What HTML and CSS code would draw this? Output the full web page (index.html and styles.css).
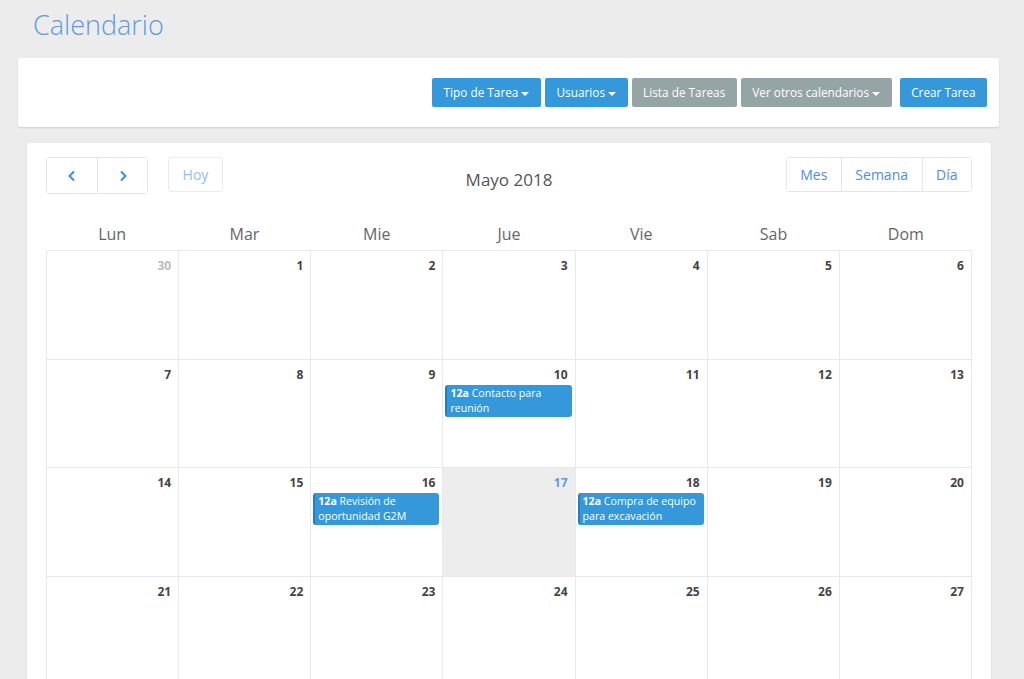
FILE: index.html
```html
<!DOCTYPE html>
<html lang="es">
  <head>
    <meta charset="UTF-8">
    <meta name="viewport" content="width=device-width, initial-scale=1.0">
    <title>Calendario</title>
    <link rel="stylesheet" href="styles.css">
  </head>
  <body>
    <h1 class="page-title">Calendario</h1>

    <div class="panel toolbar">
      <button class="btn btn-blue">Tipo de Tarea <span class="caret"></span></button>
      <button class="btn btn-blue">Usuarios <span class="caret"></span></button>
      <button class="btn btn-gray">Lista de Tareas</button>
      <button class="btn btn-gray">Ver otros calendarios <span class="caret"></span></button>
      <button class="btn btn-blue btn-create">Crear Tarea</button>
    </div>

    <div class="panel calendar">
      <div class="cal-header">
        <div class="cal-left">
          <div class="btn-group">
            <button class="cal-btn arrow">
              <svg width="10" height="12" viewBox="0 0 10 12"><path d="M7 1.5 L2.5 6 L7 10.5" fill="none" stroke="#3b8fd9" stroke-width="2"/></svg>
            </button>
            <button class="cal-btn arrow">
              <svg width="10" height="12" viewBox="0 0 10 12"><path d="M3 1.5 L7.5 6 L3 10.5" fill="none" stroke="#3b8fd9" stroke-width="2"/></svg>
            </button>
          </div>
          <button class="cal-btn today-btn">Hoy</button>
        </div>
        <h2 class="cal-title">Mayo 2018</h2>
        <div class="cal-right">
          <div class="btn-group">
            <button class="cal-btn view">Mes</button>
            <button class="cal-btn view">Semana</button>
            <button class="cal-btn view">Día</button>
          </div>
        </div>
      </div>

      <div class="day-names">
        <div>Lun</div><div>Mar</div><div>Mie</div><div>Jue</div><div>Vie</div><div>Sab</div><div>Dom</div>
      </div>

      <div class="month-grid" id="grid"></div>
    </div>

    <script>
      const grid = document.getElementById('grid');
      const events = {
        10: 'Contacto para reunión',
        16: 'Revisión de oportunidad G2M',
        18: 'Compra de equipo para excavación'
      };
      // 30 abril .. 10 junio
      const days = [30];
      for (let d = 1; d <= 31; d++) days.push(d);
      for (let d = 1; d <= 10; d++) days.push(d);

      days.forEach((d, i) => {
        const other = i === 0 || i > 31;
        const cell = document.createElement('div');
        cell.className = 'day';
        if (other) cell.classList.add('other');
        if (!other && d === 17) cell.classList.add('is-today');
        const num = document.createElement('div');
        num.className = 'day-num';
        num.innerText = d;
        cell.appendChild(num);
        if (!other && events[d]) {
          const ev = document.createElement('div');
          ev.className = 'event';
          ev.innerHTML = '<b>12a</b> ' + events[d];
          cell.appendChild(ev);
        }
        grid.appendChild(cell);
      });
    </script>
  </body>
</html>
```

FILE: styles.css
```css
html {
  overflow: hidden;
}

body {
  margin: 0;
  background-color: #ececec;
  font-family: "Open Sans", "DejaVu Sans", sans-serif;
  color: #444;
}

.page-title {
  margin: 0;
  padding: 6px 33px 0;
  height: 52px;
  font-size: 27px;
  font-weight: 300;
  line-height: 38px;
  color: #5c9ce0;
}

.panel {
  background-color: #fff;
  border-radius: 3px;
  box-shadow: 0 1px 2px rgba(0, 0, 0, 0.12);
}

.toolbar {
  margin: 0 25px 0 18px;
  height: 69px;
  padding: 0 12px;
  display: flex;
  justify-content: flex-end;
  align-items: center;
  gap: 4px;
}

.btn {
  height: 29px;
  padding: 0 11.5px;
  border: none;
  border-radius: 2px;
  font-family: inherit;
  font-size: 11.8px;
  line-height: 27px;
  color: #fff;
}

.btn-blue {
  background-color: #3498db;
}

.btn-gray {
  background-color: #95a5a6;
}

.btn-create {
  margin-left: 4px;
}

.caret {
  display: inline-block;
  margin-left: 0;
  vertical-align: middle;
  border-top: 4px solid #fff;
  border-left: 4px solid transparent;
  border-right: 4px solid transparent;
}

.calendar {
  margin: 16px 33px 0 27px;
  padding: 14px 19px 0 19px;
  height: 560px;
}

.cal-header {
  display: grid;
  grid-template-columns: 1fr auto 1fr;
  align-items: start;
}

.cal-left {
  display: flex;
  gap: 20px;
}

.cal-right {
  display: flex;
  justify-content: flex-end;
}

.btn-group {
  display: flex;
  border: 1px solid #e3e6ea;
  border-radius: 3px;
}

.cal-btn {
  background: #fff;
  border: none;
  font-family: inherit;
  font-size: 14px;
  color: #4a90d9;
  height: 35px;
}

.btn-group .cal-btn + .cal-btn {
  border-left: 1px solid #e3e6ea;
}

.arrow {
  width: 50px;
  height: 35px;
}

.arrow svg {
  display: block;
  margin: 0 auto;
}

.today-btn {
  width: 55px;
  height: 35px;
  border: 1px solid #ececec;
  border-radius: 3px;
  color: #8fc1ee;
}

.view {
  padding: 0 13.5px;
  height: 33px;
}

.cal-title {
  margin: 11px 0 0;
  font-size: 17px;
  font-weight: 400;
  color: #555;
}

.day-names {
  display: grid;
  grid-template-columns: repeat(7, 1fr);
  margin-top: 27px;
  height: 29px;
  line-height: 26px;
  font-size: 16px;
  color: #666;
  text-align: center;
}

.month-grid {
  display: grid;
  grid-template-columns: repeat(7, 1fr);
  grid-auto-rows: 108.7px;
  border-top: 1px solid #e6e9ed;
  border-left: 1px solid #e6e9ed;
}

.day {
  border-right: 1px solid #e6e9ed;
  border-bottom: 1px solid #e6e9ed;
}

.day.is-today {
  background-color: #ededed;
}

.day-num {
  padding: 6px 7px 2px 0;
  text-align: right;
  font-size: 12px;
  font-weight: 700;
  color: #444;
}

.other .day-num {
  color: #bbb;
}

.is-today .day-num {
  color: #5c9ce0;
}

.event {
  margin: 0 3px 0 2px;
  padding: 1px 2px 1px 3px;
  background-color: #3498db;
  border-left: 2px solid #2a7cbb;
  border-radius: 3px;
  font-size: 10.6px;
  line-height: 15px;
  color: #fff;
}
```
